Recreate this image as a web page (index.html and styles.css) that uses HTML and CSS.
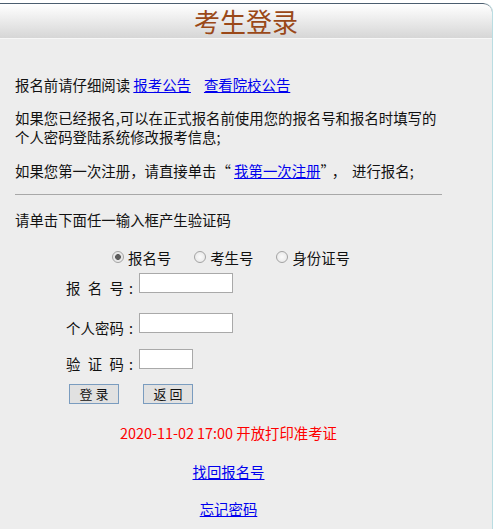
FILE: index.html
```html
<!DOCTYPE html>
<html lang="zh-CN">
<head>
<meta charset="utf-8">
<title>考生登录</title>
<link rel="stylesheet" href="styles.css">
</head>
<body>
<div class="page">
  <div class="header"><h1 class="title">考生登录</h1></div>
  <div class="content">
    <p class="p-first">报名前请仔细阅读 <a href="#">报考公告</a><a class="gap-link" href="#">查看院校公告</a></p>
    <p>如果您已经报名,可以在正式报名前使用您的报名号和报名时填写的个人密码登陆系统修改报考信息;</p>
    <p>如果您第一次注册，请直接单击“ <a href="#">我第一次注册</a>”<span class="comma">，</span>进行报名;</p>
    <hr class="rule">
    <p>请单击下面任一输入框产生验证码</p>

    <div class="radios">
      <label class="radio-item"><input type="radio" name="t" class="radio" checked><span>报名号</span></label>
      <label class="radio-item"><input type="radio" name="t" class="radio"><span>考生号</span></label>
      <label class="radio-item"><input type="radio" name="t" class="radio"><span>身份证号</span></label>
    </div>

    <div class="form">
      <div class="row row1">
        <span class="lbl"><span class="lbl-name">报 名 号</span><span class="colon">:</span></span>
        <input type="text" class="field">
      </div>
      <div class="row row2">
        <span class="lbl"><span class="lbl-name">个人密码</span><span class="colon">:</span></span>
        <input type="password" class="field">
      </div>
      <div class="row row3">
        <span class="lbl"><span class="lbl-name">验 证 码</span><span class="colon">:</span></span>
        <input type="text" class="field field-short">
      </div>
      <div class="buttons">
        <button class="btn" type="button">登 录</button>
        <button class="btn" type="button">返 回</button>
      </div>
    </div>

    <p class="center notice">2020-11-02 17:00 开放打印准考证</p>
    <p class="center link1"><a href="#">找回报名号</a></p>
    <p class="center link2"><a href="#">忘记密码</a></p>
  </div>
</div>
</body>
</html>
```

FILE: styles.css
```css
html, body {
  margin: 0;
  padding: 0;
  background: #ffffff;
}

body {
  font-family: "Noto Sans CJK SC", "Noto Sans", sans-serif;
  font-size: 14.4px;
  color: #111;
  height: 529px;
  overflow: hidden;
}

.page {
  margin-top: 3px;
  width: 492px;
  height: 526px;
  border-right: 1px solid #b9dde2;
  border-top-right-radius: 9px;
  background: #ededed;
  overflow: hidden;
}

.header {
  height: 34px;
  border-top: 1px solid #4b5d6f;
  border-top-right-radius: 9px;
  border-bottom: 1px solid #f7f7f7;
  background: linear-gradient(#ffffff, #d6d6d6);
  display: flex;
  align-items: center;
  justify-content: center;
}

.title {
  margin: 0;
  font-size: 26px;
  font-weight: normal;
  line-height: 30px;
  color: #9a4818;
}

.content {
  width: 427px;
  padding: 35.5px 0 0 15px;
}

.content p {
  margin: 14.5px 0 0;
  line-height: 19px;
}

.content p.p-first {
  margin-top: 0;
}

a {
  color: #0000ee;
  text-decoration: underline;
}

.gap-link {
  margin-left: 13px;
}

.comma {
  margin: 0 6px 0 4px;
}

.rule {
  margin: 14.5px 0 0;
  border: 0;
  height: 0;
  border-top: 1px solid #a8a8a8;
}

.radios {
  display: flex;
  align-items: center;
  margin-top: 19px;
  height: 19px;
  padding-left: 97px;
  gap: 23px;
}

.radio-item {
  display: flex;
  align-items: center;
  gap: 4px;
  line-height: 19px;
}

.radio {
  appearance: none;
  -webkit-appearance: none;
  margin: 0;
  width: 12px;
  height: 12px;
  border: 1px solid #a3a3a3;
  border-radius: 50%;
  background: radial-gradient(circle at 50% 50%, #fbfbfb 0, #e4e4e4 100%);
  box-sizing: border-box;
}

.radio:checked {
  background: radial-gradient(circle at 50% 50%, #5c5c5c 0, #5c5c5c 2.6px, #e6e6e6 3.2px, #f0f0f0 100%);
}

.form {
  padding-left: 51px;
}

.row {
  display: flex;
  align-items: flex-start;
}

.row1 { margin-top: 6.5px; }
.row2 { margin-top: 16.5px; }
.row3 { margin-top: 12.5px; }

.lbl {
  display: flex;
  width: 73px;
  padding-top: 4.5px;
  line-height: 19px;
}

.lbl-name {
  width: 58px;
  text-align: justify;
  text-align-last: justify;
}

.colon {
  padding-left: 5px;
}

.field {
  width: 94px;
  height: 20px;
  box-sizing: border-box;
  margin: 0;
  border: 1px solid #a9a9a9;
  background: #fff;
  padding: 1px 2px;
  font-size: 13px;
}

.field-short {
  width: 54px;
}

.buttons {
  display: flex;
  gap: 24px;
  margin-top: 11.5px;
  padding-left: 3px;
}

.btn {
  width: 50px;
  height: 20px;
  box-sizing: border-box;
  margin: 0;
  padding: 0;
  border: 1px solid #7a9cbf;
  background: #e1e1e1;
  font-family: "Noto Sans CJK SC", sans-serif;
  font-size: 13px;
  line-height: 18px;
  color: #111;
}

.center {
  text-align: center;
}

.content p.notice {
  margin-top: 19px;
  color: #ff0000;
}

.content p.link1 { margin-top: 19.5px; }
.content p.link2 { margin-top: 18px; }
```
